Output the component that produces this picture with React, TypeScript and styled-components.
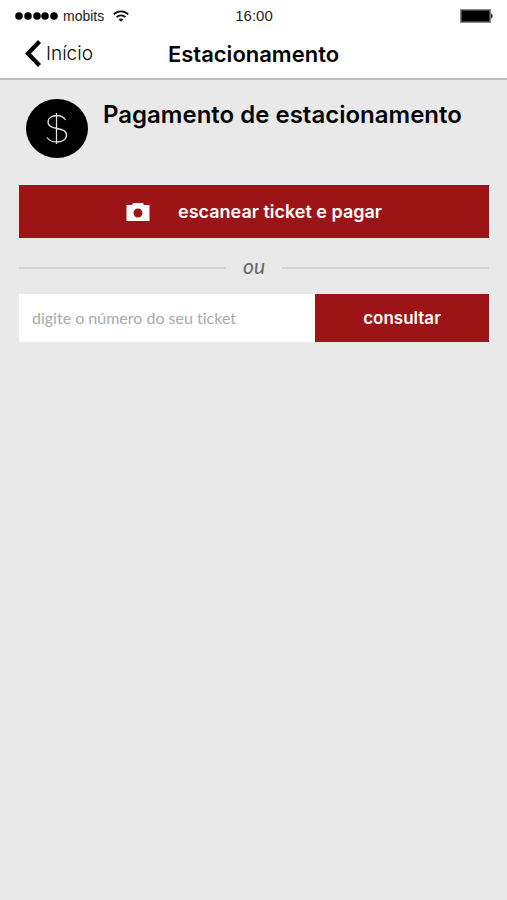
import React, { useState } from "react";
import styled, { createGlobalStyle } from "styled-components";

const GlobalStyle = createGlobalStyle`
  * { box-sizing: border-box; }
  html, body { margin: 0; background: #e9e9e9; }
  button, input { font: inherit; border: 0; border-radius: 0; margin: 0; }
  button { cursor: pointer; }
`;

const ink = "#050505";
const red = "#9d1416";
const titleFont = `Inter, "Open Sans", sans-serif`;
const systemFont = `"Liberation Sans", Arial, sans-serif`;
const bodyFont = `Lato, "Open Sans", sans-serif`;

const Screen = styled.div`
  min-height: 100vh;
  background: #e9e9e9;
  color: ${ink};
  font-family: ${bodyFont};
`;

const TopBar = styled.header`
  background: #fff;
  border-bottom: 2px solid #bdbdbd;
`;

const StatusBar = styled.div`
  display: grid;
  grid-template-columns: 1fr auto 1fr;
  align-items: center;
  height: 32px;
  padding: 0 14px 0 15px;
  font: 14px/16px ${systemFont};
  color: #222;
`;

const Carrier = styled.div`
  display: flex;
  align-items: center;
`;

const CarrierName = styled.span`
  margin: 0 9px 0 5px;
`;

const Clock = styled.time`
  font: 15px/16px ${systemFont};
`;

const BatteryIcon = styled.svg`
  justify-self: end;
`;

const NavBar = styled.nav`
  display: grid;
  grid-template-columns: 1fr auto 1fr;
  align-items: center;
  height: 46px;
  padding: 0 24px 2px;
`;

const BackLink = styled.a`
  display: flex;
  align-items: center;
  gap: 4px;
  justify-self: start;
  color: ${ink};
  font: 300 19px/24px Inter, sans-serif;
  text-decoration: none;
`;

const NavTitle = styled.h1`
  margin: 0;
  font: 600 22px/28px ${titleFont};
`;

const Content = styled.main`
  padding: 19px 18px 18px 19px;
`;

const Intro = styled.section`
  display: flex;
  gap: 15px;
  padding-left: 7px;
  margin-bottom: 27px;
`;

const DollarIcon = styled.svg`
  flex: none;
`;

const IntroTitle = styled.h2`
  margin: 0;
  font: 600 24px/32px ${titleFont};
`;

const ActionButton = styled.button`
  display: flex;
  align-items: center;
  justify-content: center;
  gap: 28px;
  padding: 0;
  background: ${red};
  color: #fff;
  font: 600 17px/24px ${titleFont};
`;

const ScanButton = styled(ActionButton)`
  width: 100%;
  height: 53px;
  font-size: 18px;
`;

const Divider = styled.div`
  display: flex;
  align-items: center;
  gap: 17px;
  height: 56px;
  color: #686868;
  font: italic 21px/24px ${bodyFont};

  &::before,
  &::after {
    content: "";
    flex: 1;
    height: 2px;
    margin-top: 4px;
    background: #d2d2d2;
  }
`;

const TicketForm = styled.form`
  display: grid;
  grid-template-columns: 63fr 37fr;
  height: 48px;
`;

const TicketInput = styled.input`
  min-width: 0;
  width: 100%;
  padding: 0 13px;
  background: #fff;
  color: #333;
  font: 16px/24px ${bodyFont};
  font-variant-ligatures: none;

  &::placeholder {
    color: #aaa;
    opacity: 1;
  }
`;

export default function App() {
  const [ticket, setTicket] = useState("");

  return (
    <Screen>
      <GlobalStyle />
      <TopBar>
        <StatusBar>
          <Carrier>
            <svg width="43" height="8" viewBox="0 0 43 8" fill="#000" aria-hidden="true">
              {[4, 13, 22, 30, 39].map((x) => (
                <circle key={x} cx={x} cy="4" r="3.8" />
              ))}
            </svg>
            <CarrierName>mobits</CarrierName>
            <svg width="16" height="12" viewBox="0 0 16 12" fill="none" stroke="#111" strokeWidth="1.8" aria-hidden="true">
              <path d="M.8 4.3C4.8.3 11.2.3 15.2 4.3" />
              <path d="M3.500 7.200c2.500-2.400 6.500-2.400 9 0" />
              <path d="M8 11.800 5.600 9.500c1.300-1.200 3.500-1.200 4.800 0z" fill="#111" stroke="none" />
            </svg>
          </Carrier>
          <Clock>16:00</Clock>
          <BatteryIcon width="33" height="14" viewBox="0 0 33 14" role="img" aria-label="Bateria">
            <rect x=".75" y=".75" width="29.5" height="12.5" fill="#000" stroke="#888" strokeWidth="1.5" />
            <path d="M31 4.500c2.200.6 2.200 4.400 0 5z" fill="#222" />
          </BatteryIcon>
        </StatusBar>
        <NavBar>
          <BackLink href="#inicio">
            <svg width="18" height="28" viewBox="0 0 18 28" fill="none" stroke="#000" strokeWidth="4.2" aria-hidden="true">
              <path d="M15.500 1.500 4 13.500l11.500 12" />
            </svg>
            Início
          </BackLink>
          <NavTitle>Estacionamento</NavTitle>
        </NavBar>
      </TopBar>
      <Content>
        <Intro>
          <DollarIcon width="62" height="59" viewBox="0 0 62 59" fill="none" aria-hidden="true">
            <ellipse cx="31" cy="29.5" rx="31" ry="29.5" fill="#000" />
            <path
              d="M39.500 21C37.500 18 34.500 16.500 31 16.500c-5 0-9 2.500-9 6.500 0 9 18.500 4 18.500 13 0 4.500-4.500 7-9.500 7-4.500 0-8-1.500-10-4.500M30.500 14v31"
              stroke="#e2e2e2"
              strokeWidth="1.3"
            />
          </DollarIcon>
          <IntroTitle>Pagamento de estacionamento</IntroTitle>
        </Intro>
        <ScanButton type="button">
          <svg width="24" height="20" viewBox="0 0 24 20" aria-hidden="true">
            <path
              fill="#fff"
              fillRule="evenodd"
              d="M.5 3H6l1-2h10l1 2h5.500v16H.5V3zM12 6.500a4.500 4.500 0 1 0 0 9 4.500 4.500 0 0 0 0-9z"
            />
          </svg>
          escanear ticket e pagar
        </ScanButton>
        <Divider>ou</Divider>
        <TicketForm onSubmit={(event) => event.preventDefault()}>
          <TicketInput
            type="text"
            inputMode="numeric"
            aria-label="Número do ticket"
            placeholder="digite o número do seu ticket"
            value={ticket}
            onChange={(event) => setTicket(event.target.value)}
          />
          <ActionButton type="submit">consultar</ActionButton>
        </TicketForm>
      </Content>
    </Screen>
  );
}
